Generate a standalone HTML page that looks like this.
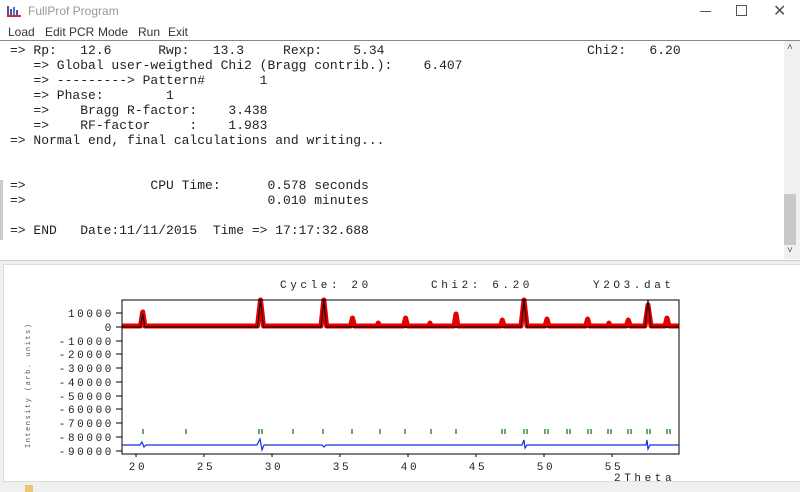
<!DOCTYPE html>
<html><head><style>
body{margin:0;width:800px;height:492px;overflow:hidden;background:#f0f0f0;font-family:"Liberation Sans",sans-serif;position:relative}
.a{position:absolute}
pre{margin:0;font-family:"Liberation Mono",monospace;font-size:13px;line-height:15px;color:#222;position:absolute;white-space:pre}
.m{font-size:12px;color:#333}
</style></head><body>
<div class="a" style="left:0;top:0;width:800px;height:42px;background:#fff"></div>
<svg class="a" style="left:7px;top:5px" width="14" height="13"><rect x="0" y="1" width="2" height="11" fill="#5a4ea0"/><rect x="3" y="4" width="2" height="8" fill="#5a4ea0"/><rect x="6" y="2" width="2" height="10" fill="#4a7bd0"/><rect x="9" y="5" width="2" height="7" fill="#5a4ea0"/><rect x="0" y="10" width="14" height="2" fill="#c83030"/></svg>
<div class="a m" style="left:28px;top:4px;color:#999">FullProf Program</div>
<div class="a" style="left:700px;top:11px;width:11px;height:1px;background:#555"></div>
<div class="a" style="left:736px;top:5px;width:9px;height:9px;border:1px solid #555"></div>
<div class="a" style="left:773px;top:1px;font-size:16px;color:#555">✕</div>
<div class="a m" style="left:8px;top:25px">Load</div>
<div class="a m" style="left:45px;top:25px">Edit PCR</div>
<div class="a m" style="left:98px;top:25px">Mode</div>
<div class="a m" style="left:138px;top:25px">Run</div>
<div class="a m" style="left:168px;top:25px">Exit</div>
<div class="a" style="left:0;top:40px;width:800px;height:219px;background:#fff;border-top:1px solid #888;border-bottom:1px solid #ccc"></div>
<div class="a" style="left:784px;top:41px;width:16px;height:218px;background:#f0f0f0"></div>
<div class="a" style="left:784px;top:194px;width:12px;height:51px;background:#c8c8c8"></div>
<div class="a" style="left:787px;top:42px;font-size:10px;color:#555">˄</div>
<div class="a" style="left:787px;top:245px;font-size:10px;color:#555">˅</div>
<pre style="left:10px;top:43px">=> Rp:   12.6      Rwp:   13.3     Rexp:    5.34
   => Global user-weigthed Chi2 (Bragg contrib.):    6.407
   => ---------> Pattern#       1
   => Phase:        1
   =>    Bragg R-factor:    3.438
   =>    RF-factor     :    1.983
=> Normal end, final calculations and writing...


=>                CPU Time:      0.578 seconds
=>                               0.010 minutes

=> END   Date:11/11/2015  Time => 17:17:32.688</pre>
<pre style="left:587px;top:43px">Chi2:   6.20</pre>
<div class="a" style="left:3px;top:264px;width:797px;height:216px;background:#fff;border:1px solid #ddd"></div>
<div class="a" style="left:0;top:180px;width:3px;height:60px;background:#ccc"></div>
<div class="a" style="left:25px;top:485px;width:8px;height:7px;background:#e8c870"></div>
<svg class="a" style="left:0;top:0" width="800" height="492" font-family="Liberation Mono,monospace" font-size="11" fill="#222">
<g letter-spacing="3.6">
<text x="280" y="288">Cycle: 20</text>
<text x="431" y="288">Chi2:  6.20</text>
<text x="593" y="288">Y2O3.dat</text>
<text x="614" y="481">2Theta</text>
</g>
<g letter-spacing="2.6" text-anchor="end">
<text x="114" y="317">10000</text><text x="114" y="331">0</text>
<text x="114" y="345">-10000</text><text x="114" y="358">-20000</text>
<text x="114" y="372">-30000</text><text x="114" y="386">-40000</text>
<text x="114" y="400">-50000</text><text x="114" y="413">-60000</text>
<text x="114" y="427">-70000</text><text x="114" y="441">-80000</text>
<text x="114" y="455">-90000</text>
</g>
<g letter-spacing="2.6" text-anchor="middle">
<text x="138" y="470">20</text><text x="206" y="470">25</text><text x="274" y="470">30</text>
<text x="342" y="470">35</text><text x="410" y="470">40</text><text x="478" y="470">45</text>
<text x="546" y="470">50</text><text x="614" y="470">55</text>
</g>
<text x="0" y="0" font-size="7" fill="#555" letter-spacing="1.5" transform="translate(30,448) rotate(-90)">Intensity (arb. units)</text>
<g stroke="#000" stroke-width="1">
<path d="M116 313H122M116 327H122M116 341H122M116 354H122M116 368H122M116 382H122M116 396H122M116 409H122M116 423H122M116 437H122M116 451H122"/>
<path d="M136 454v3M204 454v3M272 454v3M340 454v3M408 454v3M476 454v3M544 454v3M612 454v3"/>
</g>
<path fill="none" stroke="#e00000" stroke-width="5" stroke-linejoin="round" d="M122 326H140.5L142.7 312L144.9 326H257.5L260.5 300L263.5 326H321L323.8 300L326.6 326H350.5L352.5 318L354.5 326H377L378.3 323L379.6 326H403.6L405.6 318L407.6 326H429L430 323L431 326H454L456 314L458 326H500.5L502.3 320L504.1 326H521L524 300L527 326H545L547 319L549 326H585.6L587.6 319L589.6 326H608L609 323L610 326H626.3L628.3 320L630.3 326H645L648 305L651 326H665L667 318L669 326H679"/>
<path fill="none" stroke="#000" stroke-width="1" d="M122 327H140.5L142.7 314L144.9 327H257.5L260.5 300L263.5 327H321L323.8 300L326.6 327H521L524 300L527 327H645L648 300L651 327H679"/>
<rect x="122" y="300" width="557" height="154" fill="none" stroke="#000"/>
<g stroke="#1a7a1a" stroke-width="1.3">
<path d="M143 429v5M186 429v5M259 429v5M262 429v5M293 429v5M323 429v5M352 429v5M380 429v5M405 429v5M431 429v5M456 429v5M502 429v5M505 429v5M524 429v5M527 429v5M545 429v5M548 429v5M567 429v5M570 429v5M588 429v5M591 429v5M608 429v5M611 429v5M628 429v5M631 429v5M647 429v5M650 429v5M667 429v5M670 429v5"/>
</g>
<path fill="none" stroke="#1030e0" stroke-width="1.2" d="M122 445H140L142 442L144 447L146 445H257L260 439L262 450L264 445H322L324 447L326 445H522L524 440L525 448L527 445H646L647 440L648 449L650 445H679"/>
</svg>
</body></html>
